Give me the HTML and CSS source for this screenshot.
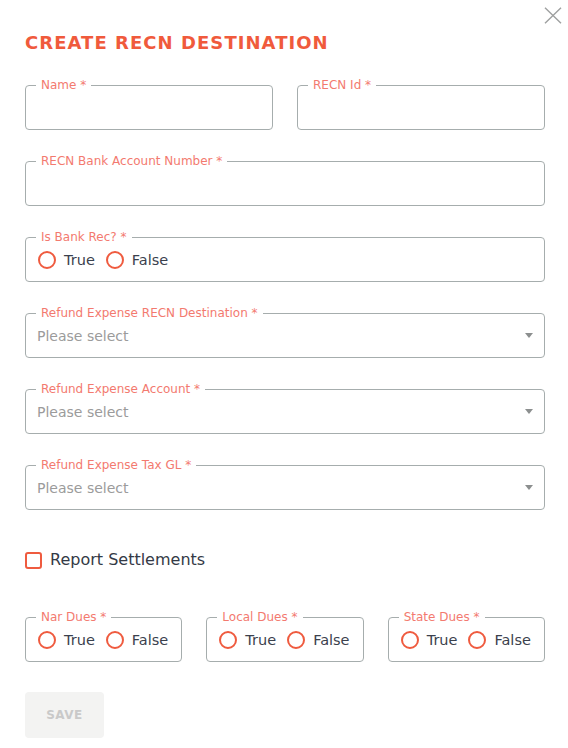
FILE: index.html
```html
<!DOCTYPE html>
<html lang="en">
<head>
<meta charset="utf-8">
<title>Create RECN Destination</title>
<link rel="stylesheet" href="styles.css">
</head>
<body>
<div class="modal">
  <button class="close" type="button" aria-label="Close">
    <svg width="18" height="17" viewBox="0 0 18 17"><path d="M1 0.8 L17 16.2 M17 0.8 L1 16.2" stroke="#9ea0a0" stroke-width="1.4" fill="none"/></svg>
  </button>
  <h1 class="title">CREATE RECN DESTINATION</h1>
  <form class="form">
    <div class="stack">
      <div class="grid2">
        <fieldset class="field"><legend>Name *</legend><input class="control input" type="text"></fieldset>
        <fieldset class="field"><legend>RECN Id *</legend><input class="control input" type="text"></fieldset>
      </div>
      <fieldset class="field"><legend>RECN Bank Account Number *</legend><input class="control input" type="text"></fieldset>
      <fieldset class="field"><legend>Is Bank Rec? *</legend>
        <div class="control radios">
          <label class="opt"><span class="radio"></span>True</label>
          <label class="opt"><span class="radio"></span>False</label>
        </div>
      </fieldset>
      <fieldset class="field"><legend>Refund Expense RECN Destination *</legend>
        <div class="control select"><span class="placeholder">Please select</span><span class="caret"></span></div>
      </fieldset>
      <fieldset class="field"><legend>Refund Expense Account *</legend>
        <div class="control select"><span class="placeholder">Please select</span><span class="caret"></span></div>
      </fieldset>
      <fieldset class="field"><legend>Refund Expense Tax GL *</legend>
        <div class="control select"><span class="placeholder">Please select</span><span class="caret"></span></div>
      </fieldset>
    </div>
    <label class="check"><span class="box"></span>Report Settlements</label>
    <div class="grid3">
      <fieldset class="field"><legend>Nar Dues *</legend>
        <div class="control radios">
          <label class="opt"><span class="radio"></span>True</label>
          <label class="opt"><span class="radio"></span>False</label>
        </div>
      </fieldset>
      <fieldset class="field"><legend>Local Dues *</legend>
        <div class="control radios">
          <label class="opt"><span class="radio"></span>True</label>
          <label class="opt"><span class="radio"></span>False</label>
        </div>
      </fieldset>
      <fieldset class="field"><legend>State Dues *</legend>
        <div class="control radios">
          <label class="opt"><span class="radio"></span>True</label>
          <label class="opt"><span class="radio"></span>False</label>
        </div>
      </fieldset>
    </div>
    <div class="actions"><button class="save" type="button" disabled>SAVE</button></div>
  </form>
</div>
</body>
</html>
```
FILE: styles.css
```css
* { box-sizing: border-box; }
html, body { margin: 0; background: #ffffff; }
body { font-family: "DejaVu Sans", "Liberation Sans", sans-serif; color: #3b414d; }

.modal {
  position: relative;
  width: 568px;
  height: 748px;
  padding: 32px 23px 0 25px;
}

.close {
  position: absolute;
  top: 7px;
  right: 6px;
  width: 18px;
  height: 17px;
  padding: 0;
  border: 0;
  background: none;
  line-height: 0;
}

.title {
  margin: 0 0 24px;
  font-size: 18px;
  line-height: 22px;
  font-weight: bold;
  letter-spacing: 1.05px;
  color: #f05a3c;
}

.form { display: flex; flex-direction: column; }
.stack { display: flex; flex-direction: column; gap: 24px; }
.grid2 { display: grid; grid-template-columns: 1fr 1fr; gap: 24px; }
.grid3 { display: grid; grid-template-columns: 1fr 1fr 1fr; gap: 24px; margin-top: 40px; }

.field {
  margin: 0;
  padding: 0 11px 0 10px;
  min-width: 0;
  border: 1px solid #a6adad;
  border-radius: 4px;
}
.field legend {
  padding: 0 5px;
  font-size: 12px;
  line-height: 14px;
  color: #f37a6f;
}

.control {
  display: flex;
  align-items: center;
  width: 100%;
  height: 37px;
}
.input {
  border: 0;
  outline: none;
  background: transparent;
  font: inherit;
  padding: 0;
}

.radios { gap: 11px; padding: 0 0 5px 2px; }
.opt {
  display: flex;
  align-items: center;
  gap: 8px;
  font-size: 14.5px;
  line-height: 18px;
  color: #3b414d;
}
.radio {
  width: 18px;
  height: 18px;
  border: 2px solid #ef5b3f;
  border-radius: 50%;
}

.select { padding: 0 0 6px 1px; }
.placeholder { font-size: 14px; line-height: 18px; color: #9b9b9b; }
.caret {
  margin-left: auto;
  width: 0;
  height: 0;
  border-left: 4.5px solid transparent;
  border-right: 4.5px solid transparent;
  border-top: 5px solid #8c8f8f;
}

.check {
  display: flex;
  align-items: center;
  gap: 8px;
  margin-top: 40px;
  height: 20px;
  font-size: 16px;
  line-height: 20px;
  color: #343a46;
}
.box {
  width: 17px;
  height: 17px;
  border: 2px solid #ef5b3f;
  border-radius: 3px;
}

.actions { margin-top: 30px; }
.save {
  width: 79px;
  height: 46px;
  padding: 0;
  border: 0;
  border-radius: 4px;
  background: #f3f3f2;
  font-family: "DejaVu Sans", sans-serif;
  font-size: 12px;
  font-weight: bold;
  letter-spacing: 0.5px;
  color: #c9c9c9;
}
```
